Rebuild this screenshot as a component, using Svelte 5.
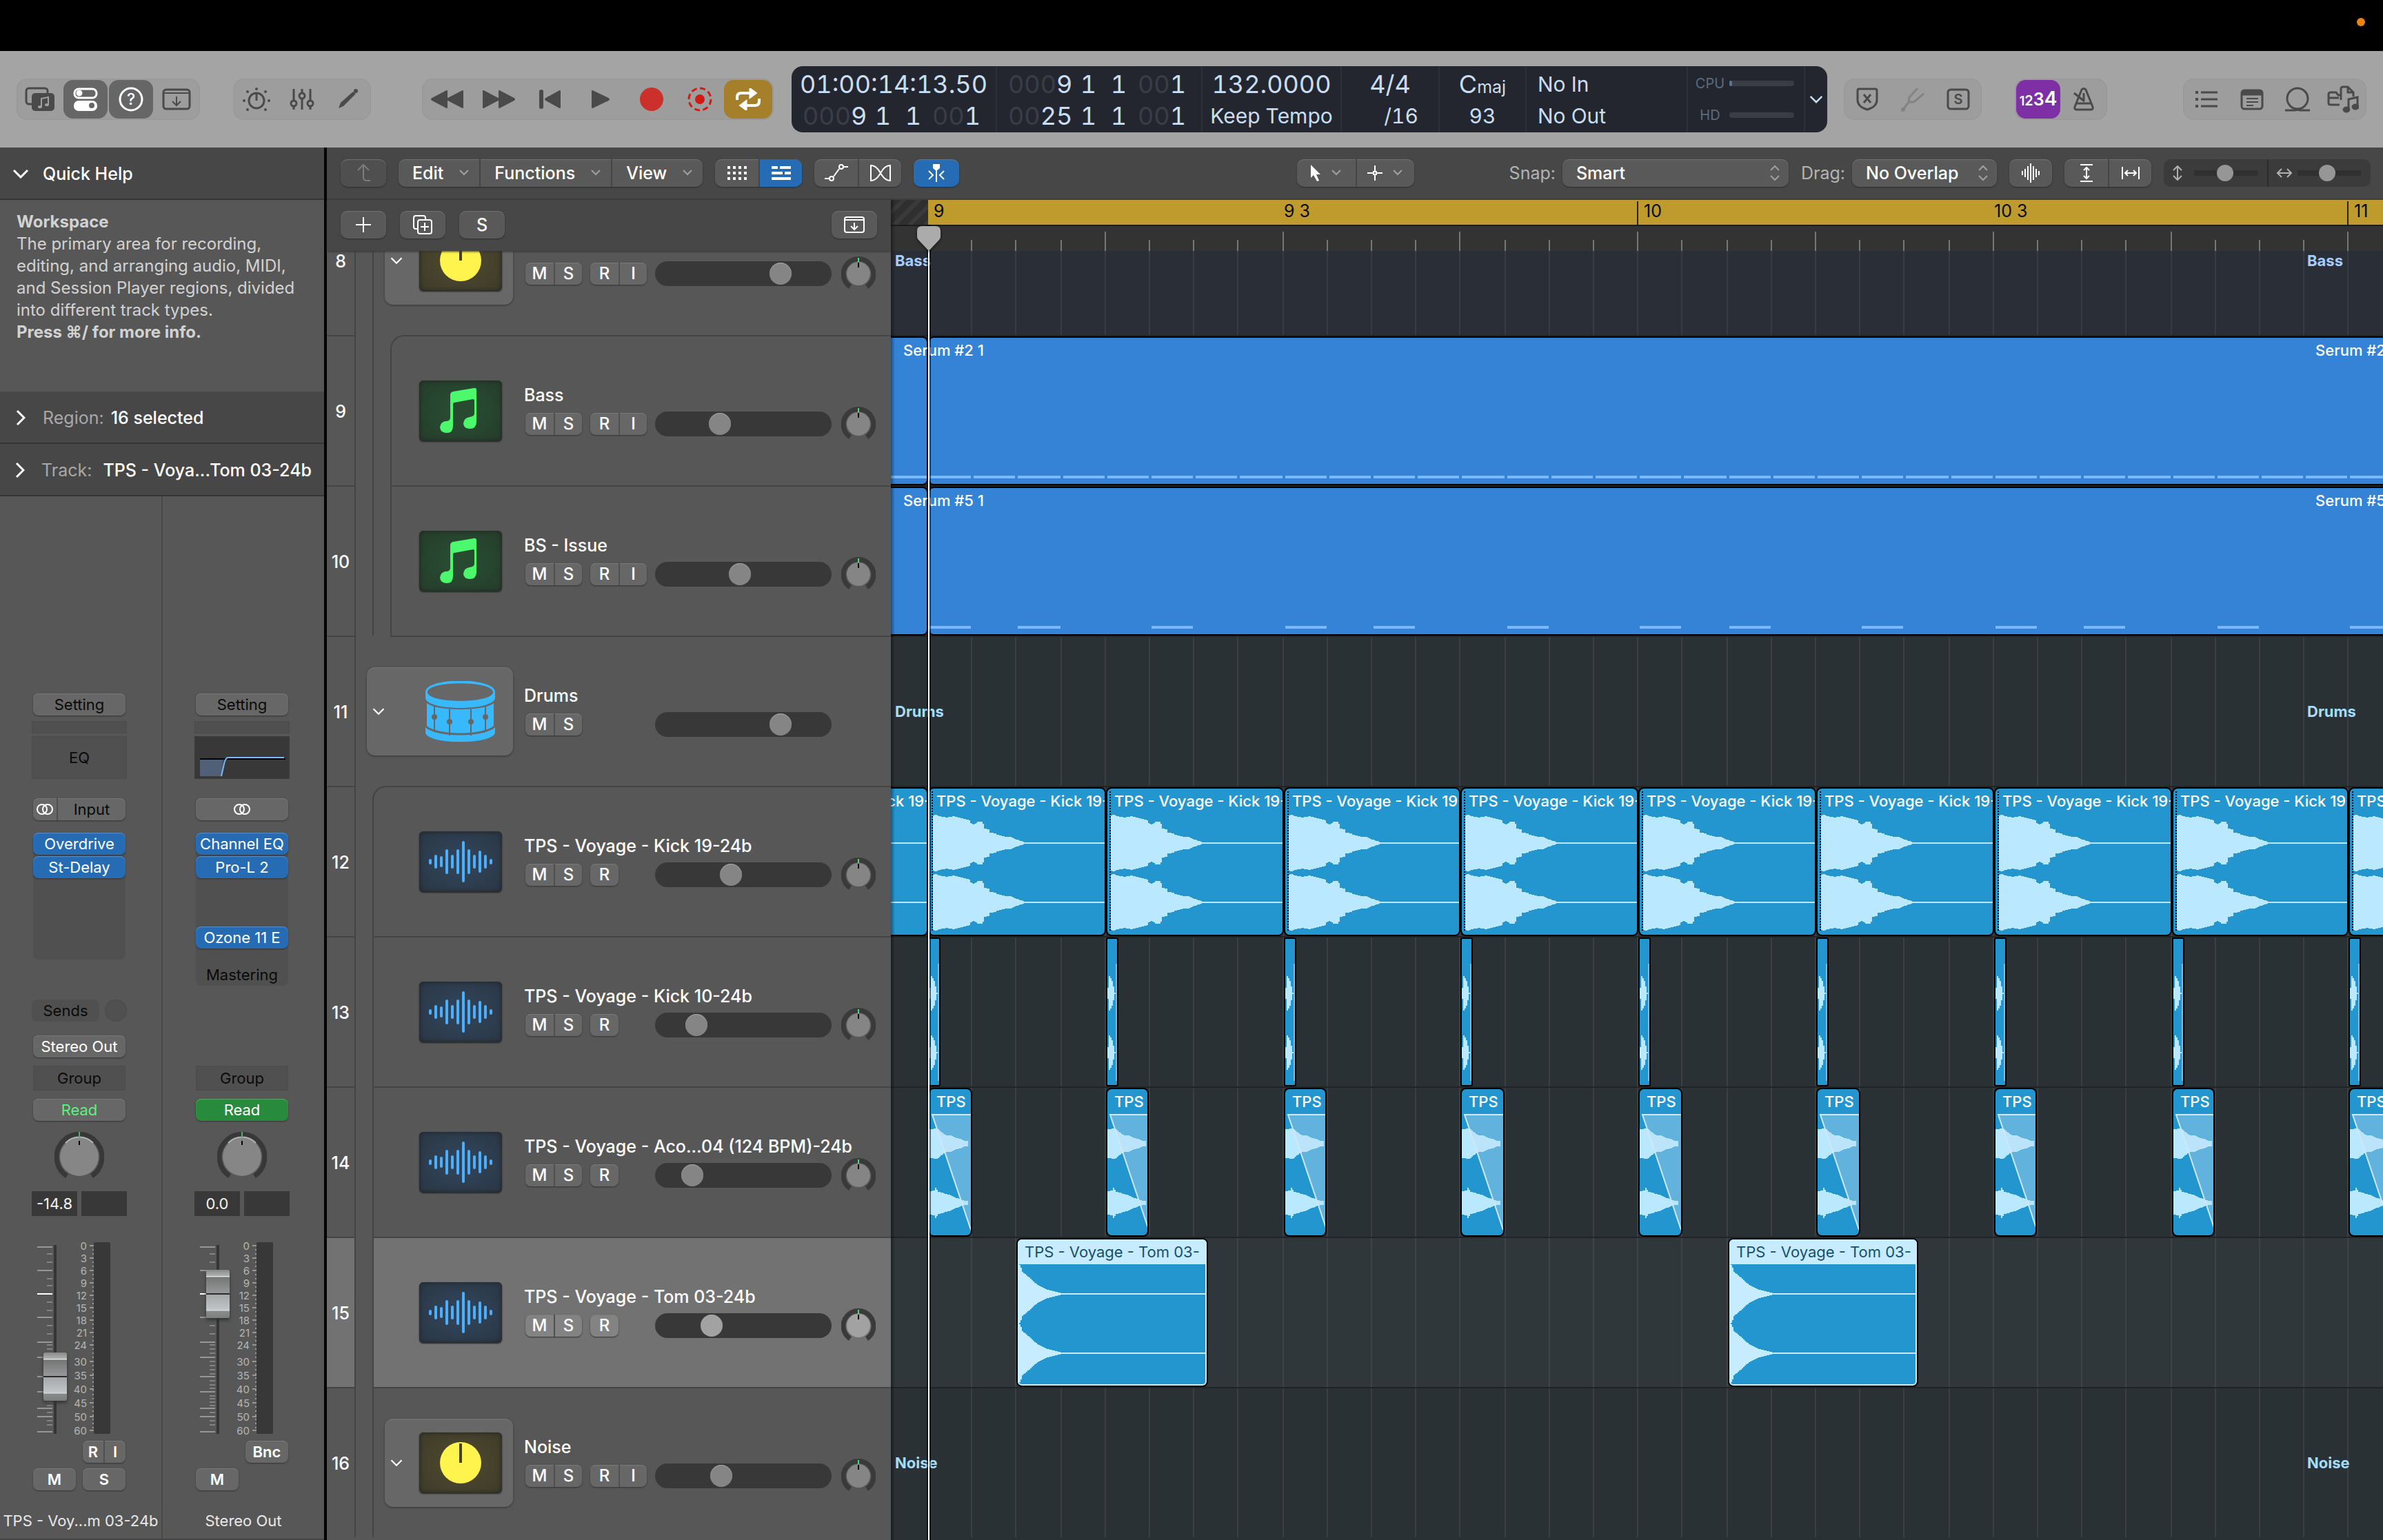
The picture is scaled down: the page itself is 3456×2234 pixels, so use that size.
<script lang="ts">
  type Clip = { kind: 'midi' | 'kick' | 'blip' | 'fade' | 'tom'; start: number; len: number; name?: string };
  type Track = {
    num: number;
    name: string;
    icon: string;
    depth: number;
    volume: number;
    folder?: boolean;
    first?: boolean;
    inset?: boolean;
    selected?: boolean;
    rec?: boolean;
    input?: boolean;
    pan?: boolean;
    tint?: string;
    marks?: string;
    notes?: number[];
    clips: Clip[];
  };

  const ORIGIN = 54;
  const UNIT = 64.4;
  const x = (t: number) => 2 * Math.round((ORIGIN + t * UNIT) / 2);
  const w = (start: number, len: number) => x(start + len) - x(start);
  const range = (from: number, to: number, step = 1) => {
    const out: number[] = [];
    for (let i = from; i <= to; i += step) out.push(i);
    return out;
  };

  const gridLines = range(1, 32);
  const rulerLabels = [
    { at: 0, text: '9', whole: true },
    { at: 8, text: '9 3' },
    { at: 16, text: '10', whole: true, bar: true },
    { at: 24, text: '10 3' },
    { at: 32, text: '11', whole: true, bar: true }
  ];
  const markOffsets = [0, 2048];

  const midi = (): Clip[] => [
    { kind: 'midi', start: -16, len: 16 },
    { kind: 'midi', start: 0, len: 48 }
  ];

  const tracks: Track[] = [
    { num: 8, name: 'Bass', icon: 'knob', depth: 1, volume: 164, folder: true, rec: true, input: true, pan: true, tint: 'navy', marks: 'Bass', clips: [] },
    { num: 9, name: 'Bass', icon: 'note', depth: 2, volume: 76, first: true, rec: true, input: true, pan: true, marks: 'Serum #2 1', notes: range(-1, 34), clips: midi() },
    { num: 10, name: 'BS - Issue', icon: 'note', depth: 2, volume: 105, rec: true, input: true, pan: true, marks: 'Serum #5 1', notes: [0, 2, 5, 8, 10, 13, 16, 18, 21, 24, 26, 29, 32], clips: midi() },
    { num: 11, name: 'Drums', icon: 'drum', depth: 0, volume: 164, folder: true, inset: true, marks: 'Drums', clips: [] },
    { num: 12, name: 'TPS - Voyage - Kick 19-24b', icon: 'audio', depth: 1, volume: 92, first: true, rec: true, pan: true, clips: range(-4, 32, 4).map((start) => ({ kind: 'kick', start, len: 4, name: 'TPS - Voyage - Kick 19-24b' })) },
    { num: 13, name: 'TPS - Voyage - Kick 10-24b', icon: 'audio', depth: 1, volume: 42, rec: true, pan: true, clips: range(0, 32, 4).map((start) => ({ kind: 'blip', start, len: 0.28 })) },
    { num: 14, name: 'TPS - Voyage - Aco...04 (124 BPM)-24b', icon: 'audio', depth: 1, volume: 36, rec: true, pan: true, clips: range(0, 32, 4).map((start) => ({ kind: 'fade', start, len: 0.98, name: 'TPS' })) },
    { num: 15, name: 'TPS - Voyage - Tom 03-24b', icon: 'audio', depth: 1, volume: 64, selected: true, rec: true, pan: true, clips: [2, 18].map((start) => ({ kind: 'tom', start, len: 4.3, name: 'TPS - Voyage - Tom 03-' })) },
    { num: 16, name: 'Noise', icon: 'knob', depth: 1, volume: 78, folder: true, rec: true, input: true, pan: true, marks: 'Noise', clips: [] }
  ];

  // envelope points are [x, amplitude]; the path steps along them two pixels at a time
  function wave(points: number[][], cy: number) {
    const top: string[] = [];
    const bottom: string[] = [];
    const end = points[points.length - 1][0];
    for (let px = points[0][0]; px < end; px += 2) {
      const i = points.findIndex((p) => p[0] > px);
      const [x0, a0] = points[i - 1];
      const [x1, a1] = points[i];
      const a = Math.max(1, Math.round(a0 + ((a1 - a0) * (px - x0)) / (x1 - x0)));
      top.push(`L${px} ${cy - a}h2`);
      bottom.unshift(`L${px + 2} ${cy + a}h-2`);
    }
    return `M${points[0][0]} ${cy}${top.join('')}${bottom.join('')}z`;
  }

  const kickEnv = [[5, 40], [8, 41], [14, 39], [24, 37], [34, 39], [42, 37], [50, 35], [57, 33], [59, 29], [63, 27], [66, 28], [69, 31], [75, 31], [77, 28], [79, 21], [85, 20], [87, 15], [95, 14], [97, 12], [106, 10], [110, 9], [116, 9], [120, 7], [126, 5], [132, 3], [136, 1], [138, 1]];
  const blipEnv = [[0, 8], [2, 25], [4, 22], [6, 18], [8, 10], [9, 2]];
  const fadeEnv = [[0, 21], [10, 22], [14, 19], [20, 14], [24, 12], [30, 12], [38, 8], [46, 6], [50, 4], [56, 4]];
  const fadeEnvLow = [[0, 17], [6, 18], [8, 22], [12, 16], [20, 14], [30, 11], [36, 8], [44, 5], [50, 3], [56, 3]];
  const tomEnv = [[2, 42], [4, 38], [6, 32], [18, 22], [24, 16], [30, 12], [40, 7], [50, 4], [58, 2], [64, 1]];

  const strips = [
    { name: 'TPS - Voy...m 03-24b', inserts: ['Overdrive', 'St-Delay'], gain: '-14.8', level: 48, out: true },
    { name: 'Stereo Out', inserts: ['Channel EQ', 'Pro-L 2'], gain: '0.0', level: 168, out: false }
  ];
  const faderLong = [7, 41, 109, 145, 167, 195, 217, 241, 253, 275];
  const faderShort = [17, 29, 53, 63, 87, 99, 121, 133, 149, 155, 161, 173, 179, 185, 191, 201, 207, 212, 223, 227, 232, 237, 247, 259, 265];
  const meterMarks = [
    [0, 5], [3, 23], [6, 41], [9, 59], [12, 77], [15, 95], [18, 113], [21, 131], [24, 149],
    [30, 173], [35, 193], [40, 213], [45, 233], [50, 253], [60, 273]
  ];
  const meterTicks = range(5, 273, 6);

  const audioBars = [8, 20, 16, 36, 20, 36, 60, 36, 20, 32, 20, 8];

  const icons: Record<string, [number, number, string]> = {
    library: [44, 36, '<path d="M10 25H6a4 4 0 0 1-4-4V6a4 4 0 0 1 4-4h23a4 4 0 0 1 4 4v3"/><rect x="10" y="9" width="33" height="26" rx="5" fill="currentColor" stroke="none"/><path d="M24 28v-11l10-2v11" stroke="#a0a0a0" stroke-width="2"/><ellipse cx="22" cy="29" rx="3" ry="2" fill="#a0a0a0" stroke="none"/><ellipse cx="32" cy="26" rx="3" ry="2" fill="#a0a0a0" stroke="none"/>'],
    inspector: [36, 36, '<rect x="2" y="3" width="32" height="13" rx="6"/><circle cx="9" cy="9" r="3" fill="currentColor"/><rect x="1" y="20" width="34" height="15" rx="7" fill="currentColor" stroke="none"/><circle cx="27" cy="27" r="4" fill="#666" stroke="none"/>'],
    help: [36, 36, '<circle cx="18" cy="18" r="16"/><text x="18" y="26" text-anchor="middle" font-size="23" font-weight="500" fill="currentColor" stroke="none">?</text>'],
    tray: [42, 34, '<rect x="2" y="3" width="38" height="28" rx="4"/><path d="M2 8h38M21 13v12M15 20l6 6 6-6" stroke-width="2"/>'],
    smart: [42, 38, '<circle cx="21" cy="21" r="11"/><path d="M21 11v10"/><g fill="currentColor" stroke="none"><circle cx="21" cy="4" r="2"/><circle cx="8" cy="8" r="2"/><circle cx="34" cy="8" r="2"/><circle cx="3" cy="21" r="2"/><circle cx="39" cy="21" r="2"/><circle cx="8" cy="34" r="2"/><circle cx="34" cy="34" r="2"/></g>'],
    mixer: [36, 34, '<path d="M6 2v17M6 27v5M18 2v6M18 16v16M30 2v17M30 27v5"/><circle cx="6" cy="23" r="4"/><circle cx="18" cy="12" r="4"/><circle cx="30" cy="23" r="4"/>'],
    pencil: [32, 32, '<path d="M3 29l3-8L24 5l4 3L10 26z" fill="currentColor" stroke="none"/><circle cx="28" cy="4" r="3" fill="currentColor" stroke="none"/>'],
    rewind: [48, 28, '<path d="M23 2v24L2 15q-2-1 0-2zM46 2v24L25 15q-2-1 0-2z" fill="currentColor" stroke-width="2" stroke-linejoin="round"/>'],
    forward: [48, 28, '<path d="M25 2v24l21-11q2-1 0-2zM2 2v24l21-11q2-1 0-2z" fill="currentColor" stroke-width="2" stroke-linejoin="round"/>'],
    start: [34, 30, '<path d="M5 4v22" stroke-width="6" stroke-linecap="round"/><path d="M32 3v24L12 16q-2-1 0-2z" fill="currentColor" stroke-width="2" stroke-linejoin="round"/>'],
    play: [28, 28, '<path d="M2 2v24l23-11q2-1 0-2z" fill="currentColor" stroke-width="2" stroke-linejoin="round"/>'],
    record: [34, 34, '<circle cx="17" cy="17" r="17" fill="#cc302a" stroke="none"/>'],
    capture: [36, 36, '<circle cx="18" cy="18" r="7" fill="#d01b12" stroke="none"/><circle cx="18" cy="18" r="16" stroke="#d01b12" stroke-dasharray="8 4.5"/>'],
    cycle: [38, 32, '<path d="M3 17v-4q0-6 6-6h14M35 15v4q0 6-6 6H15" stroke-width="4"/><path d="M22 1l8 6-8 6zM16 31l-8-6 8-6z" fill="currentColor"/>'],
    shield: [32, 34, '<path d="M4 2h24q2 0 2 2v14q0 10-14 14Q2 28 2 18V4q0-2 2-2zM11 10l10 12M21 10L11 22"/>'],
    fork: [36, 36, '<path d="M3 34l10-13M25 2L14 14q-4 6 1 8 5 1 8-3L34 10" stroke-width="3"/><circle cx="4" cy="33" r="3" fill="currentColor" stroke="none"/>'],
    solo: [34, 32, '<rect x="2" y="2" width="30" height="28" rx="4"/><text x="17" y="23" text-anchor="middle" font-size="20" font-weight="600" fill="currentColor" stroke="none">S</text>'],
    metronome: [34, 34, '<path d="M14 3q3-3 6 0l10 25q1 4-3 4H7q-4 0-3-4zM6 23h22M18 20L3 8M17 8v11"/>'],
    list: [36, 28, '<path d="M10 4h24M10 14h24M10 24h24"/><path d="M2 4h4M2 14h4M2 24h4" stroke-width="4"/>'],
    notepad: [34, 32, '<rect x="2" y="3" width="30" height="27" rx="4"/><path d="M2 7h30" stroke-width="7"/><path d="M9 15h17M9 20h17M9 25h10" stroke-width="2"/>'],
    loop: [38, 36, '<circle cx="19" cy="17" r="15"/><path d="M1 34h13q5 0 8-3M37 34H24q-5 0-8-3"/>'],
    media: [46, 40, '<path d="M18 28H5q-3 0-3-3V13q0-3 3-3h8l3 4h3M3 18h14M20 21V5q0-3 3-3h7l8 8v6M30 2v8h8"/><path d="M31 34V20l13-3v13"/><ellipse cx="28" cy="35" rx="4" ry="3" fill="currentColor"/><ellipse cx="41" cy="31" rx="4" ry="3" fill="currentColor"/>'],
    up: [22, 26, '<path d="M3 9l8-8 8 8M11 1v18q0 5 5 5h5" stroke-width="2"/>'],
    cells: [30, 22, '<g fill="currentColor" stroke="none"><path d="M1 1h4v4H1zM9 1h4v4H9zM17 1h4v4h-4zM25 1h4v4h-4zM1 9h4v4H1zM9 9h4v4H9zM17 9h4v4h-4zM25 9h4v4h-4zM1 17h4v4H1zM9 17h4v4H9zM17 17h4v4h-4zM25 17h4v4h-4z"/></g>'],
    lanes: [30, 22, '<path d="M1 3h9M13 3h16M1 11h16M20 11h9M1 19h28" stroke-width="4"/>'],
    automation: [36, 26, '<path d="M1 21h7M14 18L22 7M28 4h7" stroke-width="2"/><circle cx="11" cy="21" r="3" stroke-width="2"/><circle cx="25" cy="4" r="3" stroke-width="2"/>'],
    flex: [32, 26, '<path d="M2 2v22q8 0 14-11T30 2v22q-8 0-14-11T2 2z" stroke-width="2"/>'],
    catch: [26, 28, '<path d="M8 1h10v6l-5 4-5-4z" fill="currentColor" stroke="none"/><path d="M13 8v19M2 11l6 6-6 6M24 11l-6 6 6 6" stroke-width="2"/>'],
    pointer: [16, 26, '<path d="M1 1v19l4-4 5 9 3-1-4-9h6z" fill="currentColor" stroke="none"/>'],
    cross: [22, 22, '<path d="M11 0v9M11 13v9M0 11h9M13 11h9M9 9h4v4H9z" stroke-width="2"/>'],
    waveform: [28, 28, '<path d="M2 11v6M6 8v12M10 4v20M14 0v28M18 4v20M22 8v12M26 11v6" stroke-width="2"/>'],
    fitV: [20, 26, '<path d="M1 1h18M1 25h18M10 6v14M6 9l4-4 4 4M6 17l4 4 4-4" stroke-width="2"/>'],
    fitH: [26, 20, '<path d="M1 1v18M25 1v18M6 10h14M9 6l-4 4 4 4M17 6l4 4-4 4" stroke-width="2"/>'],
    zoomV: [16, 22, '<path d="M8 2v18M2 7l6-6 6 6M2 15l6 6 6-6" stroke-width="2"/>'],
    zoomH: [22, 16, '<path d="M2 8h18M7 2L1 8l6 6M15 2l6 6-6 6" stroke-width="2"/>'],
    plus: [22, 22, '<path d="M11 0v22M0 11h22" stroke-width="2"/>'],
    duplicate: [28, 28, '<path d="M7 20H4q-3 0-3-3V4q0-3 3-3h11q3 0 3 3v2" stroke-width="2"/><rect x="7" y="7" width="20" height="20" rx="3" stroke-width="2"/><path d="M17 11v12M11 17h12" stroke-width="2"/>'],
    trayDown: [30, 24, '<rect x="1" y="1" width="28" height="22" rx="3" stroke-width="2"/><path d="M1 5h28M15 9v9M10 14l5 5 5-5" stroke-width="2"/>'],
    chevron: [16, 10, '<path d="M2 1l6 6 6-6" stroke-width="2"/>'],
    disclosure: [24, 14, '<path d="M2 2l10 10L22 2" />'],
    closed: [14, 24, '<path d="M2 2l10 10L2 22"/>'],
    updown: [16, 24, '<path d="M2 8l6-6 6 6M2 16l6 6 6-6" stroke-width="2"/>'],
    stereo: [26, 16, '<circle cx="9" cy="8" r="7" stroke-width="2"/><circle cx="17" cy="8" r="7" stroke-width="2"/>'],
    note: [120, 88, '<path d="M45 21q0-4 4-5l30-5q4-1 4 3v46q0 10-10 10-9-1-9-8 1-8 9-9 7-1 7-5V29q0-2-2-2l-27 5q-2 0-2 3v31q0 10-9 10t-10-8q1-8 8-9 7 0 7-5z" fill="#4cf96c" stroke="none"/>'],
    knob: [120, 88, '<circle cx="60" cy="44" r="30" fill="#fff34d" stroke="none"/><path d="M60 16v28" stroke="#46422a" stroke-width="4"/>'],
    audio: [120, 88, audioBars.map((h, i) => `<path d="M${16 + i * 8} ${46 - h / 2}v${h - 4}" stroke="#4daffb" stroke-width="4" stroke-linecap="round"/>`).join('')],
    drum: [120, 88, '<g fill="#38b8fd" stroke="none"><path fill-rule="evenodd" d="M9 16C9-6 110-6 110 16v8c0 20-101 20-101 0zM12 16c0 17 95 17 95 0s-95-17-95 0z"/><path d="M11 32c14 12 83 12 97 0v34c-14 14-83 14-97 0z"/><path d="M9 64c14 18 87 18 101 0v10c0 19-101 19-101 0z"/></g><path d="M9 65c14 16 87 16 101 0" stroke="#676767" stroke-width="3"/><path d="M22 37v37M44 41v38M75 41v38M96 37v37" stroke="#676767" stroke-width="2"/><g fill="#676767" stroke="none"><circle cx="22" cy="52" r="4"/><circle cx="44" cy="59" r="4"/><circle cx="75" cy="59" r="4"/><circle cx="96" cy="52" r="4"/></g>']
  };
</script>

{#snippet icon(name: string)}
  <svg class="icon" width={icons[name][0]} height={icons[name][1]} viewBox="0 0 {icons[name][0]} {icons[name][1]}" aria-hidden="true">
    {@html icons[name][2]}
  </svg>
{/snippet}

{#snippet tool(name: string, label: string, cls = '')}
  <button class="tool {cls}" aria-label={label}>{@render icon(name)}</button>
{/snippet}

{#snippet position(parts: string[][])}
  <div class="position">
    {#each parts as [dim, lit]}
      <span><i>{dim}</i>{lit}</span>
    {/each}
  </div>
{/snippet}

<div class="app">
  <div class="menubar"><span class="mic-dot"></span></div>

  <header class="control-bar">
    <div class="group">
      {@render tool('library', 'Library')}
      {@render tool('inspector', 'Inspector', 'on')}
      {@render tool('help', 'Quick Help', 'on')}
      {@render tool('tray', 'Toolbar')}
    </div>
    <div class="group">
      {@render tool('smart', 'Smart Controls')}
      {@render tool('mixer', 'Mixer')}
      {@render tool('pencil', 'Editors')}
    </div>
    <div class="group transport">
      {@render tool('rewind', 'Rewind')}
      {@render tool('forward', 'Forward', 'wide')}
      {@render tool('start', 'Go to Beginning')}
      {@render tool('play', 'Play', 'wide')}
      {@render tool('record', 'Record')}
      {@render tool('capture', 'Capture Recording')}
      {@render tool('cycle', 'Cycle', 'cycle')}
    </div>

    <section class="lcd" aria-label="Display">
      <div class="cell time">
        <div class="big">01:00:14:13.50</div>
        {@render position([['000', '9'], ['', '1'], ['', '1'], ['00', '1']])}
      </div>
      <div class="cell time">
        {@render position([['000', '9'], ['', '1'], ['', '1'], ['00', '1']])}
        {@render position([['00', '25'], ['', '1'], ['', '1'], ['00', '1']])}
      </div>
      <div class="cell tempo">
        <div class="big">132.0000</div>
        <div>Keep Tempo</div>
      </div>
      <div class="cell sig">
        <div class="big">4/4</div>
        <div class="division">/16</div>
      </div>
      <div class="cell key">
        <div class="mode"><span class="big">C</span>maj</div>
        <div>93</div>
      </div>
      <div class="cell io">
        <div>No In</div>
        <div>No Out</div>
      </div>
      <div class="cell load">
        <div><span>CPU</span><b><em></em></b></div>
        <div><span>HD</span><b></b></div>
      </div>
      <button class="lcd-menu" aria-label="Display mode">{@render icon('disclosure')}</button>
    </section>

    <div class="group">
      {@render tool('shield', 'Replace')}
      {@render tool('fork', 'Tuner', 'dim')}
      {@render tool('solo', 'Solo')}
    </div>
    <div class="group count">
      <button class="tool count-in" aria-label="Count-in"><span>1</span><span>2</span><span>3</span><span>4</span></button>
      {@render tool('metronome', 'Metronome')}
    </div>
    <div class="group right">
      {@render tool('list', 'List Editors')}
      {@render tool('notepad', 'Notes')}
      {@render tool('loop', 'Loops')}
      {@render tool('media', 'Browsers')}
    </div>
  </header>

  <div class="workspace">
    <aside class="inspector">
      <button class="fold">{@render icon('disclosure')}<span>Quick Help</span></button>
      <div class="help">
        <strong>Workspace</strong>
        <p>The primary area for recording, editing, and arranging audio, MIDI, and Session Player regions, divided into different track types.</p>
        <strong>Press ⌘/ for more info.</strong>
      </div>
      <button class="fold"><span class="arrow">{@render icon('closed')}</span><span class="pairing"><i>Region:</i>16 selected</span></button>
      <button class="fold"><span class="arrow">{@render icon('closed')}</span><span class="pairing wide"><i>Track:</i>TPS - Voya...Tom 03-24b</span></button>

      <div class="strips">
        {#each strips as strip, n}
          <section class="strip">
            <button class="chip">Setting</button>
            <div class="slot thin"></div>
            {#if n === 0}
              <div class="slot eq">EQ</div>
            {:else}
              <div class="slot eq curve">
                <svg width="138" height="62" viewBox="0 0 138 62" aria-hidden="true">
                  <path d="M8 33h34l-3 25H8z" fill="#4f6078" />
                  <path d="M8 33h124" stroke="#000" stroke-width="2" />
                  <path d="M39 58l4-18q2-9 6-9h81" fill="none" stroke="#7ab8ff" stroke-width="2" />
                </svg>
              </div>
            {/if}
            {#if strip.out}
              <div class="pair input">
                <button aria-label="Channel format">{@render icon('stereo')}</button>
                <button>Input</button>
              </div>
            {:else}
              <button class="chip format" aria-label="Channel format">{@render icon('stereo')}</button>
            {/if}
            <div class="inserts">
              <div class="insert-list">
                {#each strip.inserts as insert}
                  <button class="chip blue">{insert}</button>
                {/each}
                {#if !strip.out}
                  <button class="chip blue last-insert">Ozone 11 E</button>
                  <span class="mastering">Mastering</span>
                {/if}
              </div>
            </div>
            <div class="sends">
              {#if strip.out}<button>Sends</button><span></span>{/if}
            </div>
            <div class="output">
              {#if strip.out}<button class="chip white">Stereo Out</button>{/if}
            </div>
            <div class="slot group-slot">Group</div>
            <button class="chip {strip.out ? 'read' : 'read-on'}">Read</button>
            <svg class="pan" width="72" height="72" viewBox="0 0 72 72" role="img" aria-label="Pan">
              <path d="M18 64A33 33 0 1 1 54 64" fill="none" stroke="#383838" stroke-width="7" />
              <circle cx="36" cy="36" r="28" fill="#868686" />
              <path d="M16 16A28 28 0 0 1 56 16" fill="none" stroke="#b5b5b5" stroke-width="2" />
              <path d="M36 0v8" stroke="#4fb06a" stroke-width="2" />
              <path d="M36 13v6" stroke="#000" stroke-width="2" />
            </svg>
            <div class="readouts"><output>{strip.gain}</output><output></output></div>
            <div class="fader">
              <svg class="scale" width="24" height="278" viewBox="0 0 24 278" aria-hidden="true">
                {#each faderLong as y}<path d="M0 {y}h22" stroke="#979797" stroke-width="2" />{/each}
                {#each faderShort as y}<path d="M14 {y}h8" stroke="#838383" stroke-width="2" />{/each}
                <path d="M0 75h22" stroke="#fff" stroke-width="2" />
              </svg>
              <input type="range" min="0" max="204" value={strip.level} aria-label="{strip.name} volume" />
              <svg class="numbers" width="38" height="278" viewBox="0 0 38 278" aria-hidden="true">
                {#each meterMarks as [db, y]}
                  <text x="28" y={y + 6} text-anchor="end">{db}</text>
                  <path d="M32 {y}h6" stroke="#979797" stroke-width="2" />
                {/each}
                {#each meterTicks as y}<path d="M36 {y}h2" stroke="#979797" stroke-width="2" />{/each}
              </svg>
              <div class="meter"></div>
            </div>
            <div class="buttons end">
              {#if strip.out}
                <div class="pair"><button>R</button><button>I</button></div>
              {:else}
                <button class="chip">Bnc</button>
              {/if}
            </div>
            <div class="buttons">
              <button class="chip">M</button>
              {#if strip.out}<button class="chip">S</button>{/if}
            </div>
            <div class="strip-name">{strip.name}</div>
          </section>
        {/each}
      </div>
    </aside>

    <main class="tracks-area">
      <nav class="tracks-menu">
        <button class="flat ghost" aria-label="Leave folder">{@render icon('up')}</button>
        <div class="joined menus">
          <button>Edit {@render icon('chevron')}</button>
          <button>Functions {@render icon('chevron')}</button>
          <button>View {@render icon('chevron')}</button>
        </div>
        <div class="joined">
          <button aria-label="Live loops">{@render icon('cells')}</button>
          <button class="blue" aria-label="Tracks view">{@render icon('lanes')}</button>
        </div>
        <div class="joined">
          <button aria-label="Automation">{@render icon('automation')}</button>
          <button aria-label="Flex">{@render icon('flex')}</button>
        </div>
        <button class="flat blue" aria-label="Catch playhead">{@render icon('catch')}</button>
        <div class="joined tools">
          <button aria-label="Pointer tool">{@render icon('pointer')}{@render icon('chevron')}</button>
          <button aria-label="Marquee tool">{@render icon('cross')}{@render icon('chevron')}</button>
        </div>
        <div class="field snap">
          <label for="snap">Snap:</label>
          <div class="select"><select id="snap"><option>Smart</option></select>{@render icon('updown')}</div>
        </div>
        <div class="field drag">
          <label for="drag">Drag:</label>
          <div class="select"><select id="drag"><option>No Overlap</option></select>{@render icon('updown')}</div>
        </div>
        <button class="flat narrow" aria-label="Waveform zoom">{@render icon('waveform')}</button>
        <div class="joined">
          <button aria-label="Fit vertically">{@render icon('fitV')}</button>
          <button aria-label="Fit horizontally">{@render icon('fitH')}</button>
        </div>
        <div class="zoom">
          <label>{@render icon('zoomV')}<input type="range" value="49" aria-label="Vertical zoom" /></label>
          <label>{@render icon('zoomH')}<input type="range" value="46" aria-label="Horizontal zoom" /></label>
        </div>
      </nav>

      <div class="panes">
        <section class="track-list" aria-label="Track headers">
          <div class="list-bar">
            <button class="flat" aria-label="Add track">{@render icon('plus')}</button>
            <button class="flat" aria-label="Duplicate track">{@render icon('duplicate')}</button>
            <button class="flat">S</button>
            <button class="flat far" aria-label="Header components">{@render icon('trayDown')}</button>
          </div>
          <div class="rows">
            <div class="scrolled">
              {#each tracks as track}
                <div class="row" class:selected={track.selected}>
                  <div class="num">{track.num}</div>
                  {#if track.depth === 2}<div class="rail"></div>{/if}
                  <div class="body" class:nested={track.depth > 0} class:first={track.first} class:inset={track.inset}>
                    <div class="head" class:folder={track.folder}>
                      {#if track.folder}<button class="toggle" aria-label="Toggle {track.name}">{@render icon('disclosure')}</button>{/if}
                      <div class="tile {track.icon}">{@render icon(track.icon)}</div>
                    </div>
                    <div class="info">
                      <div class="name">{track.name}</div>
                      <div class="controls">
                        <div class="pair"><button>M</button><button>S</button></div>
                        <div class="arm">
                          {#if track.rec}
                            <div class="pair"><button>R</button>{#if track.input}<button>I</button>{/if}</div>
                          {/if}
                        </div>
                        <input class="volume" type="range" min="0" max="220" value={track.volume} aria-label="{track.name} volume" />
                        {#if track.pan}
                          <svg class="track-pan" width="50" height="50" viewBox="0 0 50 50" role="img" aria-label="Pan">
                            <path d="M13 44A22 22 0 1 1 37 44" fill="none" stroke="#3a3a3a" stroke-width="7" />
                            <circle cx="25" cy="25" r="17" fill="currentColor" />
                            <path d="M25 2v6" stroke="#4fdc6c" stroke-width="2" />
                            <path d="M25 9v7" stroke="#000" stroke-width="2" />
                          </svg>
                        {/if}
                      </div>
                    </div>
                  </div>
                </div>
              {/each}
            </div>
          </div>
        </section>

        <section class="arrange" aria-label="Arrangement">
          <div class="ruler">
            <div class="cycle-bar">
              <div class="cycle-range">
                {#each rulerLabels as label}
                  <span class:whole={label.whole} class:bar={label.bar} style="left: {x(label.at) - ORIGIN}px">{label.text}</span>
                {/each}
              </div>
            </div>
            <div class="ticks">
              {#each gridLines as line}
                <i class:beat={line % 4 === 0} style="left: {x(line) - 2}px"></i>
              {/each}
            </div>
          </div>
          <div class="rows">
            <div class="scrolled">
              {#each tracks as track}
                <div class="lane {track.tint ?? ''}" class:selected={track.selected}>
                  {#each gridLines as line}
                    <i class="grid-line" style="left: {x(line) - 2}px"></i>
                  {/each}
                  {#each track.clips as clip}
                    <div class="clip {clip.kind}" style="left: {x(clip.start)}px; width: {w(clip.start, clip.len)}px">
                      {#if clip.name}<span class="clip-name">{clip.name}</span>{/if}
                      {#if clip.kind === 'kick'}
                        <svg width="260" height="212" viewBox="0 0 260 212" aria-hidden="true">
                          <path d={wave(kickEnv, 79) + wave(kickEnv, 165) + 'M138 78h122v2H138zM138 164h122v2H138z'} />
                          <path d="M4 4v204" stroke="#000" stroke-width="2" stroke-dasharray="2 2" />
                        </svg>
                      {:else if clip.kind === 'blip'}
                        <svg width="16" height="212" viewBox="0 0 16 212" aria-hidden="true">
                          <path d={wave(blipEnv, 79) + wave(blipEnv, 165) + 'M8 78h4v2H8zM8 164h4v2H8z'} />
                          <path d="M12 36h2v170h-2z" opacity="0.5" />
                        </svg>
                      {:else if clip.kind === 'fade'}
                        <svg width="60" height="212" viewBox="0 0 60 212" aria-hidden="true">
                          <path d={wave(fadeEnv, 79) + wave(fadeEnvLow, 165)} />
                          <path d="M4 37h56v167z" fill="#bfdcf0" opacity="0.4" />
                          <path d="M60 37H4l56 167" fill="none" stroke="#cfe8f8" stroke-width="2" />
                        </svg>
                      {:else if clip.kind === 'tom'}
                        <svg width="278" height="212" viewBox="0 0 278 212" aria-hidden="true">
                          <path d={wave(tomEnv, 79) + wave(tomEnv, 165) + 'M0 36h2v176H0zM64 78h212v2H64zM64 164h212v2H64z'} />
                        </svg>
                      {/if}
                    </div>
                  {/each}
                  {#each track.notes ?? [] as note}
                    <i class="midi-note" style="left: {x(note) + 2}px; width: {w(note, 1) - 4}px"></i>
                  {/each}
                  {#if track.marks}
                    {#each markOffsets as offset}
                      <span class="mark" class:region={track.notes} style="left: {offset + (track.notes ? 18 : 6)}px">{track.marks}</span>
                    {/each}
                  {/if}
                </div>
              {/each}
            </div>
          </div>
          <div class="playhead" style="left: {ORIGIN}px">
            <svg width="34" height="36" viewBox="0 0 34 36" aria-hidden="true">
              <path d="M7 0h20q7 0 7 7v8q0 3-2 5L17 36 2 20q-2-2-2-5V7q0-7 7-7z" fill="#ababab" />
            </svg>
          </div>
        </section>
      </div>
    </main>
  </div>
</div>

<style>
  :global(body) {
    margin: 0;
    background: #000;
  }

  .app {
    display: flex;
    flex-direction: column;
    height: 100vh;
    overflow: hidden;
    background: #575757;
    color: #fff;
    font-family: Inter, 'Noto Sans', sans-serif;
    font-size: 25px;
    line-height: 32px;
  }

  .app *,
  .app *::before {
    box-sizing: border-box;
  }

  button,
  input,
  select {
    margin: 0;
    padding: 0;
    border: none;
    background: none;
    color: inherit;
    font: inherit;
  }

  button {
    display: flex;
    align-items: center;
    justify-content: center;
    white-space: nowrap;
  }

  i,
  em {
    font-style: normal;
  }

  .icon {
    flex: none;
    fill: none;
    stroke: currentColor;
    stroke-width: 3;
  }

  .menubar {
    display: flex;
    flex: none;
    justify-content: flex-end;
    height: 74px;
    padding: 26px 26px 0 0;
    background: #000;
  }

  .mic-dot {
    width: 12px;
    height: 12px;
    border-radius: 50%;
    background: #e8830c;
  }

  /* control bar */
  .control-bar {
    display: flex;
    flex: none;
    align-items: center;
    height: 140px;
    padding: 0 24px;
    background: #a4a4a4;
    color: #4a4a4a;
  }

  .group {
    display: flex;
    flex: none;
    gap: 2px;
    height: 60px;
    margin-right: 48px;
    padding: 2px;
    border-radius: 16px;
    background: #9d9d9d;
    box-shadow: inset 0 0 2px #8c8c8c;
  }

  .tool {
    width: 64px;
    height: 56px;
    border-radius: 14px;
  }

  .tool.on {
    background: #666;
    color: #fff;
  }

  .tool.dim {
    color: #838383;
  }

  .transport {
    gap: 0;
    margin: 0 26px 0 26px;
  }

  .transport .tool {
    width: 70px;
  }

  .transport .tool.wide {
    width: 78px;
  }

  .tool.cycle {
    background: #a57f29;
    color: #fff;
  }

  .count {
    margin-right: 0;
  }

  .tool.count-in {
    align-items: baseline;
    padding-top: 2px;
    background: #7e2fa6;
    color: #fff;
    font-weight: 600;
    line-height: 50px;
  }

  .count-in span:nth-child(1) {
    font-size: 18px;
  }

  .count-in span:nth-child(2) {
    font-size: 20px;
  }

  .count-in span:nth-child(3) {
    font-size: 25px;
  }

  .count-in span:nth-child(4) {
    font-size: 28px;
  }

  .group.right {
    margin: 0 0 0 auto;
  }

  .lcd {
    display: flex;
    flex: none;
    height: 96px;
    margin-right: 24px;
    border-radius: 16px;
    background: #24262f;
    color: #c9def2;
    font-size: 30px;
    line-height: 46px;
    font-variant-numeric: tabular-nums;
  }

  .cell {
    padding: 3px 0 0;
    border-right: 2px solid #2e313b;
    text-align: center;
    white-space: nowrap;
  }

  .big {
    font-size: 36px;
  }

  .time {
    width: 298px;
  }

  .position {
    display: grid;
    grid-template-columns: 88px 40px 44px 86px;
    padding-left: 16px;
    font-size: 36px;
    text-align: right;
  }

  .position i {
    color: #3a3d48;
  }

  .tempo {
    width: 202px;
  }

  .sig {
    width: 142px;
  }

  .division {
    padding-left: 32px;
  }

  .key {
    width: 126px;
  }

  .mode {
    height: 46px;
    font-size: 25px;
  }

  .io {
    width: 234px;
    padding-left: 16px;
    text-align: left;
  }

  .load {
    width: 170px;
    padding: 2px 14px 2px 10px;
    color: #5a6b80;
    font-size: 20px;
  }

  .load div {
    display: flex;
    align-items: center;
    justify-content: space-between;
  }

  .load span {
    width: 44px;
  }

  .load b {
    width: 94px;
    height: 8px;
    border-radius: 4px;
    background: #3a3d48;
  }

  .load em {
    display: block;
    width: 4px;
    height: 8px;
    border-radius: 4px;
    background: #5a7390;
  }

  .lcd-menu {
    width: 32px;
  }

  .lcd-menu .icon {
    width: 20px;
  }

  /* inspector */
  .workspace {
    display: flex;
    flex: 1;
    min-height: 0;
  }

  .inspector {
    display: flex;
    flex: none;
    flex-direction: column;
    width: 474px;
    border-right: 4px solid #000;
  }

  .fold {
    flex: none;
    justify-content: flex-start;
    gap: 20px;
    height: 76px;
    padding: 2px 18px 0;
    border-bottom: 2px solid #353535;
    background: #474747;
    font-weight: 500;
  }

  .fold .arrow {
    display: flex;
    justify-content: center;
    width: 24px;
  }

  .pairing {
    display: flex;
    gap: 10px;
  }

  .pairing.wide {
    gap: 16px;
  }

  .fold i {
    color: #a8a8a8;
    font-weight: 400;
  }

  .help {
    flex: none;
    height: 278px;
    padding: 16px 22px 16px 24px;
    color: #d2d2d2;
    font-size: 24px;
  }

  .help p {
    margin: 0;
  }

  .strips {
    display: flex;
    flex: 1;
    min-height: 0;
    border-bottom: 2px solid #454545;
  }

  .strip {
    display: flex;
    flex: 1;
    flex-direction: column;
    justify-content: flex-end;
    width: 50%;
    padding: 0 50px 0 46px;
    font-size: 22px;
    color: #0a0a0a;
  }

  .strip + .strip {
    border-left: 2px solid #474747;
  }

  .chip,
  .pair {
    flex: none;
    height: 32px;
    margin: 0 2px;
    border-radius: 8px;
    background: #676767;
    box-shadow: 0 1px 2px #333, inset 0 1px 1px #7c7c7c;
  }

  .slot {
    display: flex;
    flex: none;
    align-items: center;
    justify-content: center;
    background: #505050;
    box-shadow: inset 0 0 2px #444;
  }

  .thin {
    height: 18px;
    margin-top: 8px;
  }

  .eq {
    height: 62px;
    margin: 4px 0 28px;
  }

  .curve {
    background: #383838;
  }

  .pair {
    display: flex;
    overflow: hidden;
  }

  .pair button {
    flex: 1;
  }

  .pair button + button {
    border-left: 2px solid #4f4f4f;
  }

  .input button:first-child {
    flex: none;
    width: 34px;
    color: #fff;
  }

  .format {
    color: #fff;
  }

  .inserts {
    flex: none;
    height: 242px;
    margin: 18px 2px 0;
  }

  .insert-list {
    display: flex;
    flex-direction: column;
    gap: 2px;
    height: 184px;
    border-radius: 8px;
    background: #505050;
  }

  .strip + .strip .insert-list {
    height: 222px;
  }

  .insert-list .chip {
    margin: 0;
  }

  .chip.blue {
    background: #266cb5;
    box-shadow: 0 1px 2px #333, inset 0 1px 1px #5a90cb;
    color: #fff;
  }

  .insert-list .last-insert {
    margin-top: 68px;
  }

  .mastering {
    margin-top: 20px;
    text-align: center;
  }

  .sends {
    display: flex;
    flex: none;
    gap: 8px;
    height: 32px;
    margin-bottom: 20px;
  }

  .sends button {
    width: 98px;
    border-radius: 8px;
    background: #505050;
  }

  .sends span {
    width: 32px;
    border-radius: 50%;
    background: #505050;
    box-shadow: inset 0 0 2px #444;
  }

  .output {
    display: flex;
    flex: none;
    height: 32px;
  }

  .output .chip {
    flex: 1;
  }

  .group-slot {
    height: 36px;
    margin: 12px 2px;
  }

  .white {
    color: #fff;
  }

  .read {
    color: #5cf27b;
  }

  .chip.read-on {
    background: #288a3c;
    box-shadow: 0 1px 2px #333, inset 0 1px 1px #5aa868;
    color: #fff;
  }

  .pan {
    flex: none;
    align-self: center;
    margin: 16px 0 14px;
  }

  .readouts {
    display: flex;
    flex: none;
    gap: 6px;
  }

  .readouts output {
    flex: 1;
    height: 36px;
    background: #383838;
    color: #f2f2f2;
    line-height: 36px;
    text-align: center;
  }

  .fader {
    display: flex;
    flex: none;
    height: 278px;
    margin: 38px 0 10px 8px;
  }

  .fader input {
    appearance: none;
    writing-mode: vertical-lr;
    direction: rtl;
    width: 34px;
    height: 274px;
    margin: 4px 0 0 -15px;
    background: linear-gradient(#353535, #353535) center / 4px 100% no-repeat;
  }

  .fader input::-webkit-slider-thumb {
    appearance: none;
    width: 34px;
    height: 70px;
    border-radius: 3px;
    background: linear-gradient(#888 0, #b0b2b2 9px, #dfe2e2 9px, #dfe2e2 10px, #757575 11px, #979a9a 34px, #2c2c2c 34px, #2c2c2c 36px, #a5a7a8 36px, #c2c6c9 58px, #e2e6e6 59px, #8a8c8c 60px, #7d7f7f 100%);
    box-shadow: 0 3px 5px #333;
  }

  .fader .numbers {
    overflow: visible;
    margin-left: 1px;
    font-size: 15px;
    fill: #b5b5b5;
  }

  .meter {
    width: 24px;
    border-radius: 2px;
    background: #383838;
  }

  .buttons {
    display: flex;
    flex: none;
    gap: 6px;
    margin-bottom: 8px;
    color: #fff;
    font-weight: 600;
  }

  .end {
    justify-content: flex-end;
  }

  .buttons .chip,
  .buttons .pair {
    width: 62px;
  }

  .strip-name {
    flex: none;
    margin: 20px -48px 10px -44px;
    color: #e8e8e8;
    text-align: center;
    white-space: nowrap;
  }

  /* tracks menu bar */
  .tracks-area {
    display: flex;
    flex: 1;
    flex-direction: column;
    min-width: 0;
  }

  .tracks-menu {
    display: flex;
    flex: none;
    align-items: center;
    gap: 18px;
    height: 76px;
    padding: 0 18px 0 20px;
    border-bottom: 2px solid #3e3e3e;
    background: #474747;
    font-weight: 500;
  }

  .flat,
  .joined,
  .select {
    height: 40px;
    border-radius: 10px;
    background: #595959;
    box-shadow: 0 1px 2px #2c2c2c, inset 0 1px 1px #747474;
  }

  .flat {
    width: 66px;
  }

  .flat.narrow {
    width: 62px;
  }

  .flat.ghost {
    background: #4f4f4f;
    color: #7d7d7d;
  }

  .joined {
    display: flex;
    flex: none;
    overflow: hidden;
  }

  .joined button {
    gap: 24px;
    width: 63px;
  }

  .joined button + button {
    border-left: 2px solid #454545;
  }

  .menus button {
    gap: 22px;
    width: auto;
    padding: 0 14px 0 20px;
  }

  .menus .icon,
  .tools .icon:last-child {
    color: #a0a0a0;
  }

  .tracks-menu .blue {
    background: #266cb5;
  }

  .tools {
    margin: 0 120px 0 auto;
  }

  .tools button {
    gap: 14px;
    width: 85px;
  }

  .field {
    display: flex;
    align-items: center;
    gap: 10px;
  }

  .field label {
    color: #b3b3b3;
    font-weight: 400;
  }

  .select {
    display: grid;
    grid-template-areas: 'stack';
    align-items: center;
    width: 328px;
  }

  .drag .select {
    width: 210px;
  }

  .select select {
    grid-area: stack;
    width: 100%;
    height: 40px;
    padding: 0 20px;
    appearance: none;
  }

  .select .icon {
    grid-area: stack;
    justify-self: end;
    margin-right: 12px;
    color: #a0a0a0;
    pointer-events: none;
  }

  .zoom {
    display: flex;
    flex: none;
    height: 40px;
    border-radius: 10px;
    background: #3b3b3b;
  }

  .zoom label {
    display: flex;
    align-items: center;
    justify-content: space-between;
    width: 150px;
    padding: 0 14px 0 12px;
    color: #b0b0b0;
  }

  .zoom label + label {
    border-left: 2px solid #2b2b2b;
  }

  .zoom input {
    appearance: none;
    width: 92px;
    height: 24px;
    background: linear-gradient(#303030, #303030) center / 100% 8px no-repeat;
  }

  .zoom input::-webkit-slider-thumb {
    appearance: none;
    width: 24px;
    height: 24px;
    border-radius: 50%;
    background: #969696;
  }

  .panes {
    display: flex;
    flex: 1;
    min-height: 0;
  }

  /* track headers */
  .track-list {
    display: flex;
    flex: none;
    flex-direction: column;
    width: 818px;
  }

  .list-bar {
    position: relative;
    display: flex;
    flex: none;
    gap: 20px;
    height: 74px;
    padding: 16px 20px 0;
    background: #474747;
    box-shadow: 0 1px 3px #333;
    font-weight: 500;
  }

  .far {
    margin-left: auto;
  }

  .rows {
    flex: 1;
    min-height: 0;
    overflow: hidden;
  }

  .scrolled {
    margin-top: -96px;
  }

  .row {
    display: flex;
    height: 218px;
  }

  .num {
    flex: none;
    width: 42px;
    margin-right: 24px;
    border-top: 2px solid #444;
    border-right: 2px solid #444;
    line-height: 218px;
    font-weight: 500;
    text-align: center;
  }

  .rail {
    flex: none;
    width: 26px;
    border-left: 2px solid #444;
  }

  .body {
    display: flex;
    flex: 1;
    align-items: center;
    border-top: 2px solid #444;
  }

  .body.nested {
    border-left: 2px solid #444;
  }

  .body.first {
    border-top-left-radius: 20px;
  }

  .body.inset {
    margin-left: -24px;
    border-top-color: transparent;
    background: linear-gradient(#444, #444) right top / calc(100% - 50px) 2px no-repeat border-box;
  }

  .selected .num,
  .selected .body {
    background: #727272;
  }

  .head {
    display: flex;
    flex: 1;
    align-items: center;
    justify-content: flex-end;
    height: 128px;
    margin: 0 16px;
    padding: 0 16px 0 8px;
    border-radius: 12px;
  }

  .head.folder {
    justify-content: space-between;
    background: #676767;
    box-shadow: 0 1px 3px #333, inset 0 1px 1px #787878;
  }

  .toggle .icon {
    width: 18px;
  }

  .tile {
    display: flex;
    height: 88px;
    border-radius: 6px;
  }

  .tile.note {
    background: radial-gradient(#274a30 30%, #263c2c);
    box-shadow: 0 1px 2px #222, inset 0 0 6px #222;
  }

  .tile.audio {
    background: radial-gradient(#2f4256 30%, #2b3644);
    box-shadow: 0 1px 2px #222, inset 0 0 6px #222;
  }

  .tile.knob {
    background: radial-gradient(#4b452c 30%, #3d3b2a);
    box-shadow: 0 1px 2px #222, inset 0 0 6px #222;
  }

  .info {
    flex: none;
    width: 532px;
    padding: 6px 22px 0 0;
  }

  .name {
    font-weight: 500;
    white-space: nowrap;
  }

  .controls {
    display: flex;
    align-items: center;
    height: 52px;
    font-weight: 500;
    font-size: 24px;
  }

  .controls .pair button {
    flex: none;
    width: 41px;
  }

  .selected .pair {
    background: #838383;
  }

  .arm {
    display: flex;
    width: 104px;
    padding-left: 8px;
  }

  .volume {
    appearance: none;
    width: 256px;
    height: 36px;
    margin-right: 14px;
    padding: 0 2px;
    border-radius: 18px;
    background: #383838;
  }

  .volume::-webkit-slider-thumb {
    appearance: none;
    width: 32px;
    height: 32px;
    border-radius: 50%;
    background: #858585;
    box-shadow: inset 0 1px 1px #a5a5a5;
  }

  .selected .volume::-webkit-slider-thumb {
    background: #a2a2a2;
  }

  .track-pan {
    flex: none;
    color: #858585;
  }

  .selected .track-pan {
    color: #a2a2a2;
  }

  /* arrangement */
  .arrange {
    position: relative;
    display: flex;
    flex: 1;
    flex-direction: column;
    min-width: 0;
    overflow: hidden;
    background: #2a3134;
  }

  .arrange::after {
    position: absolute;
    inset: 0 auto 0 0;
    width: 6px;
    background: linear-gradient(90deg, #0006, #0000);
    content: '';
  }

  .ruler {
    flex: none;
    height: 74px;
    background: #333;
  }

  .cycle-bar {
    height: 38px;
    padding-left: 54px;
    border-bottom: 2px solid #1d1d1d;
    background: repeating-linear-gradient(135deg, #2f2f2f 0 10px, #3a3a3a 10px 16px);
  }

  .cycle-range {
    position: relative;
    height: 36px;
    background: #bf9b2d;
    color: #0a0a0a;
    font-size: 25px;
    line-height: 32px;
  }

  .cycle-range span {
    position: absolute;
    height: 36px;
    white-space: pre;
  }

  .cycle-range .whole {
    padding-left: 8px;
  }

  .cycle-range .bar::before {
    position: absolute;
    inset: 2px auto 0 -2px;
    width: 2px;
    background: #2b2411;
    content: '';
  }

  .ticks {
    position: relative;
    height: 36px;
  }

  .ticks i {
    position: absolute;
    bottom: 0;
    width: 2px;
    height: 16px;
    background: #777;
  }

  .ticks .beat {
    height: 28px;
  }

  .lane {
    position: relative;
    height: 218px;
    border-top: 2px solid #1f2426;
    background: #2a3134;
  }

  .lane.navy {
    background: #2a2e37;
  }

  .lane.selected {
    background: #30373a;
  }

  .grid-line {
    position: absolute;
    inset: 0 auto 0 0;
    width: 2px;
    background: #ffffff12;
  }

  .clip {
    position: absolute;
    top: 0;
    height: 216px;
    overflow: hidden;
    border: 2px solid #000;
    border-radius: 8px;
    background: #2496cf;
  }

  .clip.midi {
    background: #3583d6;
  }

  .clip.blip {
    border-radius: 3px;
  }

  .clip svg {
    position: absolute;
    inset: 0 auto auto 0;
    fill: #b9e8ff;
  }

  .clip-name {
    position: relative;
    display: block;
    height: 36px;
    overflow: hidden;
    padding-left: 10px;
    font-size: 22px;
    font-weight: 500;
    line-height: 36px;
    white-space: nowrap;
  }

  .tom svg {
    fill: #c8ecff;
  }

  .tom::after {
    position: absolute;
    inset: 0;
    border: 2px solid #c8ecff;
    border-radius: 6px;
    content: '';
  }

  .tom .clip-name {
    background: #c8ecff;
    color: #14506e;
    font-weight: 400;
  }

  .midi-note {
    position: absolute;
    bottom: 10px;
    height: 4px;
    background: #7ab8ff;
  }

  .mark {
    position: absolute;
    top: 92px;
    color: #a3dcff;
    font-size: 22px;
    font-weight: 700;
    white-space: nowrap;
  }

  .navy .mark {
    color: #a5cdff;
  }

  .mark.region {
    top: 4px;
    color: #fff;
    font-weight: 500;
  }

  .playhead {
    position: absolute;
    inset: 38px auto 0 0;
    width: 2px;
    background: #fff;
    box-shadow: 0 0 0 2px #0008;
  }

  .playhead svg {
    position: absolute;
    inset: 0 auto auto -16px;
    filter: drop-shadow(0 1px 2px #111);
  }
</style>
